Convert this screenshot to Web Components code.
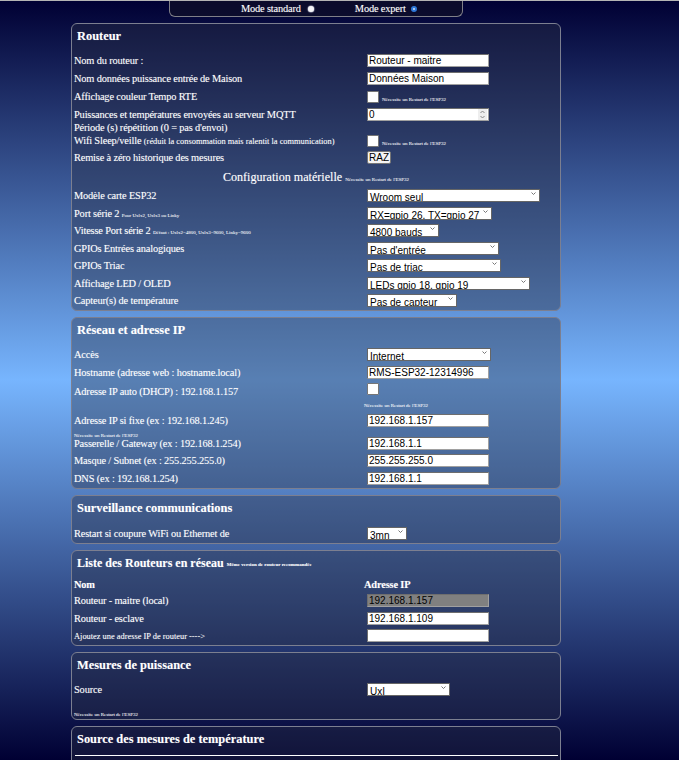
<!DOCTYPE html>
<html lang="fr">
<head>
<meta charset="utf-8">
<title>Routeur</title>
<style>
    html, body { margin: 0; height: 760px; overflow: hidden; }
    body {
        box-sizing: border-box;
        border-top: 1px solid #b4b4b4;
        background: linear-gradient(#000033, #77b5fe 50%, #000033);
        font-family: "Liberation Serif", serif;
        font-size: 10.4px;
        letter-spacing: -.17px;
        color: #fff;
        text-shadow: 0 0 1px rgba(255, 255, 255, .35);
    }
</style>
</head>
<body>
<rms-page>
    <rms-mode-bar></rms-mode-bar>

    <rms-section heading="Routeur" height="288">
        <rms-row h="17.5" top="4">Nom du routeur :<rms-input slot="control" value="Routeur - maitre"></rms-input></rms-row>
        <rms-row h="17.5">Nom données puissance entrée de Maison<rms-input slot="control" value="Données Maison"></rms-input></rms-row>
        <rms-row h="19">Affichage couleur Tempo RTE<rms-check slot="control" note></rms-check></rms-row>
        <rms-row h="16">Puissances et températures envoyées au serveur MQTT<rms-input slot="control" value="0" spin></rms-input></rms-row>
        <rms-row h="11">Période (s) répétition (0 = pas d'envoi)</rms-row>
        <rms-row h="15">Wifi Sleep/veille <small>(réduit la consommation mais ralentit la communication)</small><rms-check slot="control" note></rms-check></rms-row>
        <rms-row h="19">Remise à zéro historique des mesures<rms-button slot="control">RAZ</rms-button></rms-row>
        <rms-subtitle>Configuration matérielle <rms-note>Nécessite un Restart de l'ESP32</rms-note></rms-subtitle>
        <rms-row h="17.5">Modèle carte ESP32<rms-select slot="control" w="173" value="Wroom seul"></rms-select></rms-row>
        <rms-row h="17.5">Port série 2 <rms-note>Pour Uxlx2, Uxlx3 ou Linky</rms-note><rms-select slot="control" w="125" value="RX=gpio 26, TX=gpio 27"></rms-select></rms-row>
        <rms-row h="17.5">Vitesse Port série 2 <rms-note>Défaut : Uxlx2=4800, Uxlx3=9600, Linky=9600</rms-note><rms-select slot="control" w="72" value="4800 bauds"></rms-select></rms-row>
        <rms-row h="17.5">GPIOs Entrées analogiques<rms-select slot="control" w="132" value="Pas d'entrée"></rms-select></rms-row>
        <rms-row h="17.5">GPIOs Triac<rms-select slot="control" w="134" value="Pas de triac"></rms-select></rms-row>
        <rms-row h="17.5">Affichage LED / OLED<rms-select slot="control" w="163" value="LEDs gpio 18, gpio 19"></rms-select></rms-row>
        <rms-row h="17.5">Capteur(s) de température<rms-select slot="control" w="90" value="Pas de capteur"></rms-select></rms-row>
    </rms-section>

    <rms-section heading="Réseau et adresse IP" height="172">
        <rms-row h="17.5" top="4">Accès<rms-select slot="control" w="124" value="Internet"></rms-select></rms-row>
        <rms-row h="17.5">Hostname (adresse web : hostname.local)<rms-input slot="control" value="RMS-ESP32-12314996"></rms-input></rms-row>
        <rms-row h="20">Adresse IP auto (DHCP) : 192.168.1.157<rms-check slot="control" lift></rms-check></rms-row>
        <rms-row h="6" top="-3"><rms-note slot="control">Nécessite un Restart de l'ESP32</rms-note></rms-row>
        <rms-row h="32">Adresse IP si fixe (ex : 192.168.1.245)<rms-input slot="control" value="192.168.1.157"></rms-input></rms-row>
        <rms-row h="8" top="-8"><rms-note>Nécessite un Restart de l'ESP32</rms-note></rms-row>
        <rms-row h="17.5" top="-1.5">Passerelle / Gateway (ex : 192.168.1.254)<rms-input slot="control" value="192.168.1.1"></rms-input></rms-row>
        <rms-row h="17.5">Masque / Subnet (ex : 255.255.255.0)<rms-input slot="control" value="255.255.255.0"></rms-input></rms-row>
        <rms-row h="17.5">DNS (ex : 192.168.1.254)<rms-input slot="control" value="192.168.1.1"></rms-input></rms-row>
    </rms-section>

    <rms-section heading="Surveillance communications" height="49">
        <rms-row h="17.5" top="5">Restart si coupure WiFi ou Ethernet de<rms-select slot="control" w="40" value="3mn"></rms-select></rms-row>
    </rms-section>

    <rms-section heading="Liste des Routeurs en réseau" note="Même version de routeur recommandée" size="12" height="96">
        <rms-row h="15" top="2"><b>Nom</b><b slot="head">Adresse IP</b></rms-row>
        <rms-row h="17.5">Routeur - maitre (local)<rms-input slot="control" value="192.168.1.157" disabled></rms-input></rms-row>
        <rms-row h="17.5">Routeur - esclave<rms-input slot="control" value="192.168.1.109"></rms-input></rms-row>
        <rms-row h="17.5"><small>Ajoutez une adresse IP de routeur ----&gt;</small><rms-input slot="control"></rms-input></rms-row>
    </rms-section>

    <rms-section heading="Mesures de puissance" height="68">
        <rms-row h="17.5" top="4">Source<rms-select slot="control" w="83" value="UxI"></rms-select></rms-row>
        <rms-row h="27"><rms-note>Nécessite un Restart de l'ESP32</rms-note></rms-row>
    </rms-section>

    <rms-section heading="Source des mesures de température" height="80">
        <rms-rule></rms-rule>
    </rms-section>
</rms-page>

<script>
class RmsPage extends HTMLElement {
    constructor() {
        super();
        this.attachShadow({ mode: 'open' });
        this.shadowRoot.innerHTML = `
            <style>
                :host {
                    display: flex;
                    flex-direction: column;
                    align-items: center;
                    gap: 6px;
                    width: 632px;
                }
            </style>
            <slot></slot>
        `;
    }
}

class RmsModeBar extends HTMLElement {
    constructor() {
        super();
        this.attachShadow({ mode: 'open' });
        this.shadowRoot.innerHTML = `
            <style>
                :host {
                    display: flex;
                    box-sizing: border-box;
                    width: 294px;
                    height: 16px;
                    border: 1px solid #808088;
                    border-top: 0;
                    border-radius: 0 0 6px 6px;
                    background: rgba(16, 16, 40, .7);
                    align-items: center;
                }
                .mode { display: flex; align-items: center; }
                .std { margin-left: 71px; gap: 7px; }
                .exp { margin-left: 41px; gap: 5px; }
                i {
                    display: block;
                    width: 6px;
                    height: 6px;
                    border-radius: 50%;
                    background: #f4f4f8;
                    box-shadow: 0 0 1px .5px #a4a4b8;
                }
                .exp i {
                    box-sizing: border-box;
                    background: #cfe0f8;
                    border: 2px solid #2f78d8;
                    box-shadow: none;
                }
            </style>
            <span class="mode std">Mode standard <i></i></span>
            <span class="mode exp">Mode expert <i></i></span>
        `;
    }
}

class RmsSection extends HTMLElement {
    constructor() {
        super();
        this.attachShadow({ mode: 'open' });
    }

    connectedCallback() {
        const heading = this.getAttribute('heading') || '';
        const note = this.getAttribute('note');
        const height = this.getAttribute('height') || '80';
        const size = this.getAttribute('size') || '12.4';
        this.shadowRoot.innerHTML = `
            <style>
                :host {
                    display: block;
                    box-sizing: border-box;
                    width: 490px;
                    height: ${height}px;
                    padding: 0 2px;
                    border: 1px solid #7c7f90;
                    border-radius: 6px;
                    background: rgba(42, 47, 68, .4);
                    overflow: hidden;
                }
                h2 {
                    margin: 0;
                    padding: 5px 0 0 3px;
                    height: 19px;
                    font-size: ${size}px;
                    line-height: 15px;
                    font-weight: bold;
                    letter-spacing: 0;
                }
                h2 span { font-size: 5px; vertical-align: 1px; }
            </style>
            <h2>${heading}${note ? ` <span>${note}</span>` : ''}</h2>
            <slot></slot>
        `;
    }
}

class RmsRow extends HTMLElement {
    constructor() {
        super();
        this.attachShadow({ mode: 'open' });
    }

    connectedCallback() {
        const h = this.getAttribute('h') || '17.5';
        const top = this.getAttribute('top') || '0';
        this.shadowRoot.innerHTML = `
            <style>
                :host {
                    display: grid;
                    grid-template-columns: 290px 1fr;
                    align-items: center;
                    height: ${h}px;
                    margin-top: ${top}px;
                    white-space: nowrap;
                }
                ::slotted(small) { font-size: 8.4px; letter-spacing: 0; }
            </style>
            <div><slot></slot></div>
            <div><slot name="head"></slot><slot name="control"></slot></div>
        `;
    }
}

class RmsInput extends HTMLElement {
    constructor() {
        super();
        this.attachShadow({ mode: 'open' });
    }

    connectedCallback() {
        const value = this.getAttribute('value') || '';
        const disabled = this.hasAttribute('disabled');
        const spin = this.hasAttribute('spin');
        this.shadowRoot.innerHTML = `
            <style>
                :host { display: block; margin-left: 3px; width: 122px; letter-spacing: 0; text-shadow: none; }
                .box {
                    display: flex;
                    align-items: center;
                    justify-content: space-between;
                    box-sizing: border-box;
                    height: 13px;
                    padding: 0 1px;
                    border: 1px solid;
                    border-color: #6e6e6e #a0a0a0 #a0a0a0 #6e6e6e;
                    background: ${disabled ? '#808080' : '#fff'};
                    color: #000;
                    font: 10px/11px "Liberation Sans", sans-serif;
                    overflow: hidden;
                }
                svg { display: block; }
            </style>
            <div class="box"><span>${value}</span>${spin ? `
                <svg width="9" height="11" viewBox="0 0 9 11" fill="none" stroke="#8a8a8a">
                    <rect width="9" height="11" fill="#eee" stroke="none"/>
                    <path d="M2.5 4 4.5 2 6.5 4M2.5 7 4.5 9 6.5 7"/>
                </svg>` : ''}</div>
        `;
    }
}

class RmsSelect extends HTMLElement {
    constructor() {
        super();
        this.attachShadow({ mode: 'open' });
    }

    connectedCallback() {
        const value = this.getAttribute('value') || '';
        const w = this.getAttribute('w') || '120';
        this.shadowRoot.innerHTML = `
            <style>
                :host { display: block; margin-left: 3px; width: ${w}px; letter-spacing: 0; text-shadow: none; }
                .box {
                    display: flex;
                    justify-content: space-between;
                    box-sizing: border-box;
                    height: 13px;
                    padding: 0 3px 0 2px;
                    border: 1px solid #666;
                    background: #fff;
                    color: #000;
                    font: 10px/15px "Liberation Sans", sans-serif;
                    overflow: hidden;
                }
                svg { flex: none; margin-top: 2px; }
            </style>
            <div class="box"><span>${value}</span>
                <svg width="5" height="4" viewBox="0 0 5 4" fill="none" stroke="#777"><path d="M.5 .5 2.5 2.5 4.5 .5"/></svg>
            </div>
        `;
    }
}

class RmsCheck extends HTMLElement {
    constructor() {
        super();
        this.attachShadow({ mode: 'open' });
    }

    connectedCallback() {
        const note = this.hasAttribute('note');
        const lift = this.hasAttribute('lift') ? 4 : 0;
        this.shadowRoot.innerHTML = `
            <style>
                :host { display: flex; align-items: flex-end; gap: 3px; margin: 0 0 ${lift}px 3px; letter-spacing: 0; }
                i {
                    display: block;
                    box-sizing: border-box;
                    width: 12px;
                    height: 12px;
                    background: #fff;
                    border: 1px solid #767676;
                    border-radius: 1px;
                }
                span { font-size: 5px; line-height: 6px; }
            </style>
            <i></i>${note ? `<span>Nécessite un Restart de l'ESP32</span>` : ''}
        `;
    }
}

class RmsButton extends HTMLElement {
    constructor() {
        super();
        this.attachShadow({ mode: 'open' });
        this.shadowRoot.innerHTML = `
            <style>
                :host {
                    display: block;
                    box-sizing: border-box;
                    width: 24px;
                    height: 13px;
                    margin-left: 3px;
                    border: 1px solid #777;
                    border-radius: 2px;
                    background: #f4f4f4;
                    color: #000;
                    font: 10px/11px "Liberation Sans", sans-serif;
                    letter-spacing: 0;
                    text-shadow: none;
                    text-align: center;
                }
            </style>
            <slot></slot>
        `;
    }
}

class RmsNote extends HTMLElement {
    constructor() {
        super();
        this.attachShadow({ mode: 'open' });
        this.shadowRoot.innerHTML = `
            <style>:host { font-size: 5px; letter-spacing: 0; }</style>
            <slot></slot>
        `;
    }
}

class RmsSubtitle extends HTMLElement {
    constructor() {
        super();
        this.attachShadow({ mode: 'open' });
        this.shadowRoot.innerHTML = `
            <style>
                :host {
                    display: block;
                    height: 20px;
                    line-height: 20px;
                    text-align: center;
                    font-size: 12.1px;
                    letter-spacing: 0;
                }
            </style>
            <slot></slot>
        `;
    }
}

class RmsRule extends HTMLElement {
    constructor() {
        super();
        this.attachShadow({ mode: 'open' });
        this.shadowRoot.innerHTML = `
            <style>
                :host { display: block; height: 1px; margin: 4px 0 0 1px; width: 483px; background: #fff; }
            </style>
        `;
    }
}

customElements.define('rms-page', RmsPage);
customElements.define('rms-mode-bar', RmsModeBar);
customElements.define('rms-section', RmsSection);
customElements.define('rms-row', RmsRow);
customElements.define('rms-input', RmsInput);
customElements.define('rms-select', RmsSelect);
customElements.define('rms-check', RmsCheck);
customElements.define('rms-button', RmsButton);
customElements.define('rms-note', RmsNote);
customElements.define('rms-subtitle', RmsSubtitle);
customElements.define('rms-rule', RmsRule);
</script>
</body>
</html>
